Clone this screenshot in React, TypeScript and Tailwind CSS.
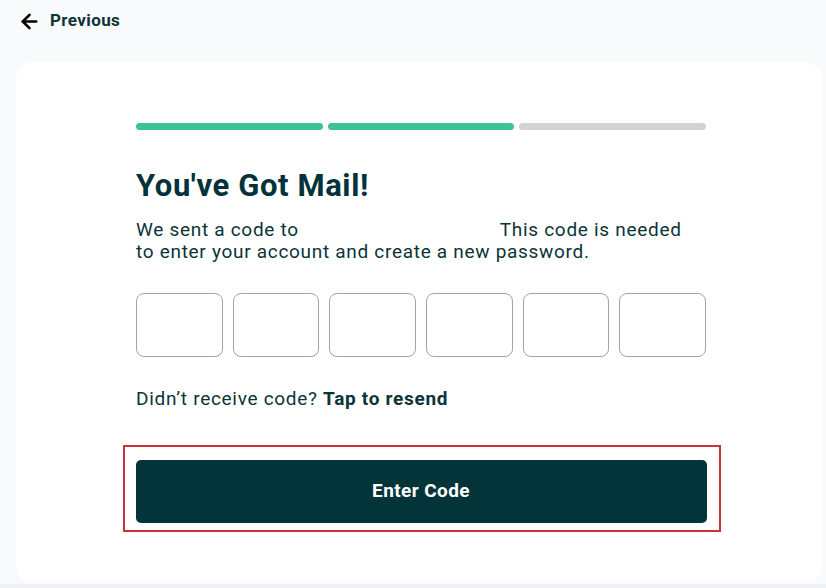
import { ArrowLeft } from 'lucide-react';

const steps = ['done', 'done', 'todo'];

export default function App() {
  return (
    <div className="flex h-[588px] w-full flex-col overflow-hidden bg-[#f9fafc] font-['Roboto',sans-serif] text-[#0b3438]">
      <button className="ml-[18px] mt-[10px] flex h-[22px] items-center gap-[9px] text-[17px] font-bold tracking-[0.4px]">
        <ArrowLeft className="h-[23px] w-[23px] text-black" strokeWidth={2.7} />
        Previous
      </button>

      <div className="ml-[16px] mr-[4px] mt-[30px] h-[521px] shrink-0 rounded-[18px] bg-white">
        <div className="ml-[120px] w-[570px] pt-[61px]">
          <div className="flex gap-[5px]">
            {steps.map((s, i) => (
              <div
                key={i}
                className={s === 'done' ? 'h-[7px] flex-1 rounded-full bg-[#3cc492]' : 'h-[7px] flex-1 rounded-full bg-[#d2d2d2]'}
              />
            ))}
          </div>

          <h1 className="mt-[38px] text-[31px] font-bold leading-[36px] tracking-[0.6px] text-[#04323a]">You've Got Mail!</h1>

          <p className="mt-[15px] text-[19px] leading-[22px] tracking-[0.7px]">
            <span className="mr-[201px]">We sent a code to</span>
            This code is needed
            <br />
            to enter your account and create a new password.
          </p>

          <div className="mt-[30px] flex gap-[10px]">
            {[0, 1, 2, 3, 4, 5].map((n) => (
              <input
                key={n}
                maxLength={1}
                className="h-[64px] w-0 flex-1 rounded-[8px] border border-[#a3a3a3] text-center text-[24px] outline-none"
              />
            ))}
          </div>

          <p className="mt-[31px] text-[19px] leading-[22px] tracking-[0.7px]">
            Didn’t receive code? <span className="font-bold tracking-[0.7px]">Tap to resend</span>
          </p>

          <div className="-ml-[13px] -mr-[15px] mt-[35px] border-[2.5px] border-[#c9313b] pb-[7px] pl-[10.5px] pr-[12.5px] pt-[12.5px]">
            <button className="flex h-[63px] w-full items-center justify-center rounded-[5px] bg-[#03343a] text-[19px] font-bold tracking-[0.4px] text-white">
              Enter Code
            </button>
          </div>
        </div>
      </div>
      <div className="mt-[1px] h-[10px] bg-[#eef0f3]" />
    </div>
  );
}
